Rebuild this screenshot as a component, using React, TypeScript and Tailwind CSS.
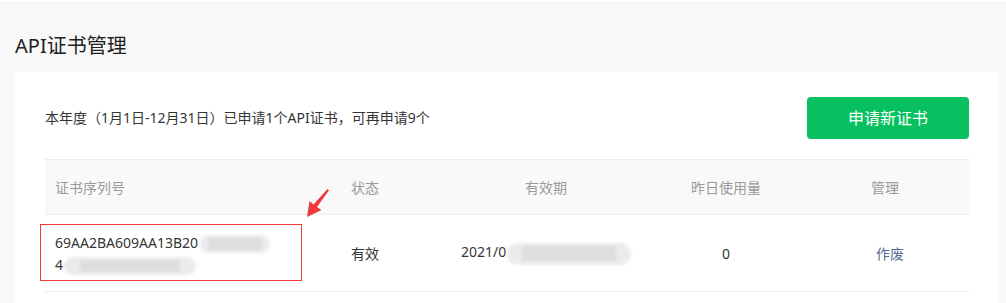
import React from 'react';

// blurred mosaic that hides part of a value
function Smudge({ className }: { className: string }) {
  return (
    <span className={`inline-block align-middle rounded-full bg-[#ebebeb] blur-[1.5px] ${className}`}>
      <span className="block mx-[12%] mt-[3px] h-[70%] bg-[#dedede]" />
    </span>
  );
}

function App() {
  const headers = ['证书序列号', '状态', '有效期', '昨日使用量', '管理'];

  return (
    <div className="relative min-h-screen bg-[#f8f8f8] font-['Noto_Sans','Noto_Sans_CJK_SC',sans-serif] text-[#353535] overflow-hidden">
      {/* top bar */}
      <div className="h-[2px] bg-white shadow-[0_1px_2px_rgba(0,0,0,0.06)]" />

      <div className="px-[15px] pr-[7px]">
        <h1 className="pt-[31px] pb-[13px] text-[20px] leading-[26px] text-[#222]">API证书管理</h1>

        {/* card */}
        <div className="bg-white rounded-[4px] px-[30px] pt-[25px] pb-10">
          <div className="flex items-center justify-between">
            <p className="text-[14px] leading-[20px]">本年度（1月1日-12月31日）已申请1个API证书，可再申请9个</p>
            <button className="w-[162px] h-[42px] rounded-[4px] bg-[#07c160] text-white text-[16px]">申请新证书</button>
          </div>

          {/* table */}
          <div className="relative mt-5 text-[14px]">
            <div className="grid grid-cols-[296px_100px_210px_150px_168px] h-[56px] items-center bg-[#f9f9f9] border-y border-[#ececec] text-[#9a9a9a]">
              {headers.map((h, i) => (
                <div key={h} className={i < 2 ? 'pl-[10px]' : 'text-center'}>{h}</div>
              ))}
            </div>
            <div className="grid grid-cols-[296px_100px_210px_150px_168px] h-[77px] items-center border-b border-[#ececec]">
              <div className="pl-[10px] leading-[22px] pt-[1px] whitespace-nowrap">
                <div>69AA2BA609AA13B20<Smudge className="w-[70px] h-[18px] ml-[2px]" /></div>
                <div>4<Smudge className="w-[132px] h-[18px] ml-[1px]" /></div>
              </div>
              <div className="pl-[10px]">有效</div>
              <div className="pl-[20px] whitespace-nowrap">2021/0<Smudge className="w-[124px] h-[22px] ml-[1px]" /></div>
              <div className="text-center">0</div>
              <div className="text-center pl-[10px] text-[#576b95]">作废</div>
            </div>

            {/* annotation box */}
            <div className="absolute left-[-5px] top-[65px] w-[262px] h-[57px] border border-[#f03a3a]" />
          </div>
        </div>
      </div>

      {/* annotation arrow */}
      <svg className="absolute left-[300px] top-[184px]" width="34" height="36" viewBox="0 0 34 36">
        <polygon points="7,33 9.5,17 13.5,20.5 27.5,5 29,6.2 17,23 21.5,26" fill="#f03a3a" />
      </svg>
    </div>
  );
}

export default App;
